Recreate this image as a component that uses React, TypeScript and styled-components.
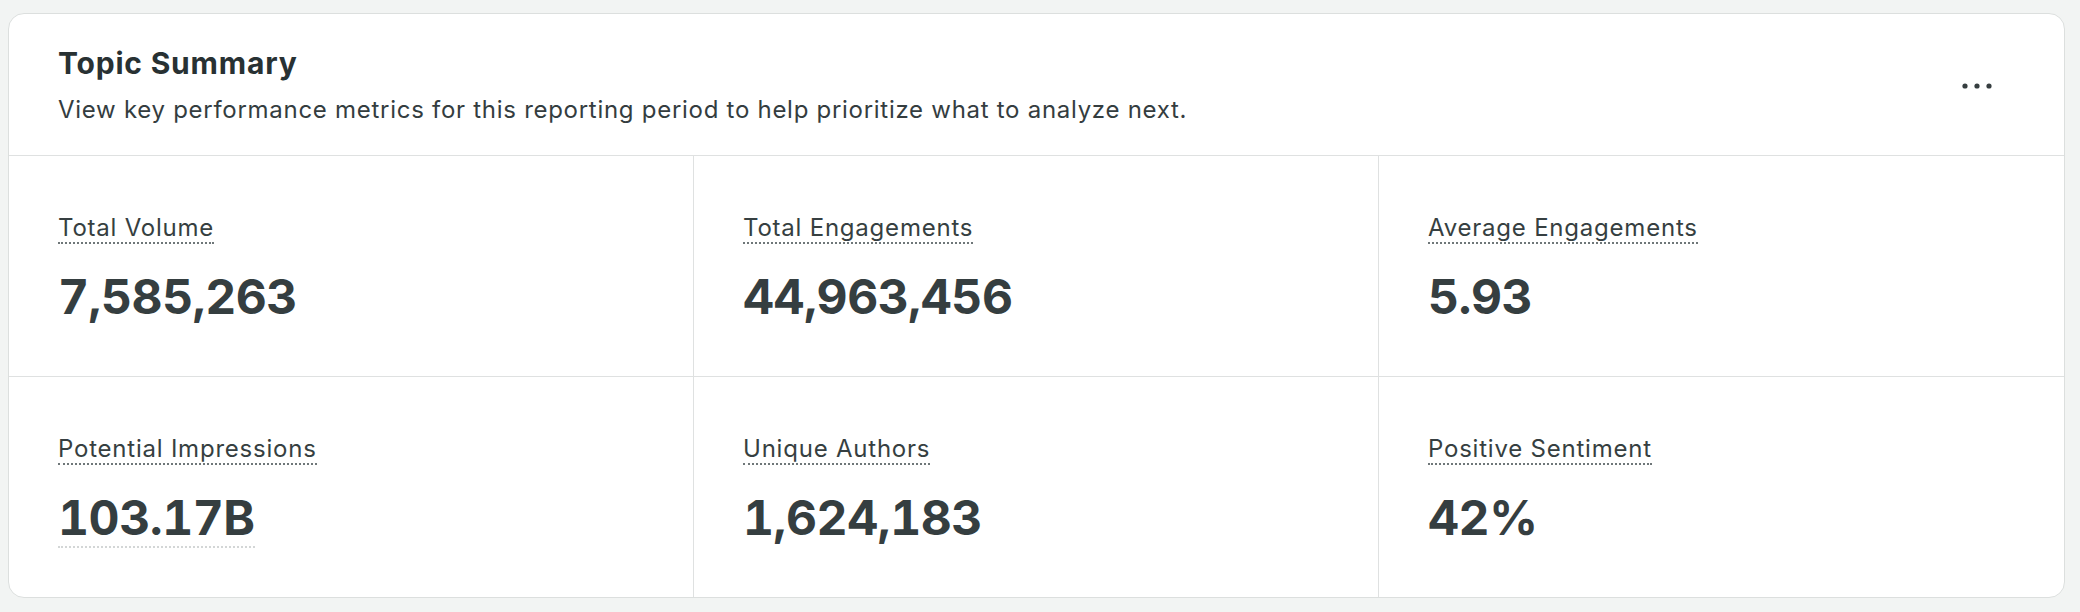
import React from "react";
import styled, { createGlobalStyle } from "styled-components";

const GlobalStyle = createGlobalStyle`
  html, body {
    margin: 0;
    padding: 0;
    background: #f2f4f3;
  }
  body {
    font-family: Inter, "Noto Sans", "Liberation Sans", sans-serif;
    -webkit-font-smoothing: antialiased;
  }
`;

const Page = styled.div`
  padding: 13px 15px 14px 8px;
`;

const Card = styled.section`
  background: #ffffff;
  border: 1px solid #dcdfde;
  border-radius: 16px;
  overflow: hidden;
`;

const Header = styled.header`
  display: flex;
  align-items: center;
  justify-content: space-between;
  padding: 31px 63px 29px 49px;
  border-bottom: 1px solid #dfe1e1;
`;

const HeaderText = styled.div`
  display: flex;
  flex-direction: column;
  gap: 13px;
`;

const Title = styled.h2`
  margin: 0;
  font-size: 30px;
  line-height: 36px;
  font-weight: 700;
  letter-spacing: 0.8px;
  color: #283133;
`;

const Description = styled.p`
  margin: 0;
  font-size: 24px;
  line-height: 32px;
  font-weight: 400;
  letter-spacing: 0.72px;
  color: #343d3f;
`;

const MoreButton = styled.button`
  display: flex;
  align-items: center;
  justify-content: center;
  width: 48px;
  height: 48px;
  padding: 0;
  border: none;
  background: transparent;
  color: #363e40;
  cursor: pointer;
`;

const Grid = styled.div`
  display: grid;
  grid-template-columns: repeat(3, 1fr);
`;

const Cell = styled.div<{ $lastCol: boolean; $lastRow: boolean }>`
  display: flex;
  flex-direction: column;
  align-items: flex-start;
  padding: 58px 49px 49px;
  border-right: ${(p) => (p.$lastCol ? "none" : "1px solid #dfe1e1")};
  border-bottom: ${(p) => (p.$lastRow ? "none" : "1px solid #dfe1e1")};
`;

const Label = styled.span`
  display: inline-block;
  margin-bottom: 25px;
  font-size: 24px;
  line-height: 28px;
  font-weight: 400;
  letter-spacing: 0.78px;
  color: #363f41;
  border-bottom: 2px dotted #6f7779;
`;

const Value = styled.span<{ $dotted?: boolean }>`
  display: inline-block;
  font-size: 48px;
  line-height: 56px;
  font-weight: 700;
  font-variant-numeric: tabular-nums;
  letter-spacing: -0.45px;
  color: #353e40;
  border-bottom: 2px dotted ${(p) => (p.$dotted ? "#d3d6d6" : "transparent")};
`;

const metrics = [
  { label: "Total Volume", value: "7,585,263" },
  { label: "Total Engagements", value: "44,963,456" },
  { label: "Average Engagements", value: "5.93" },
  { label: "Potential Impressions", value: "103.17B", dotted: true },
  { label: "Unique Authors", value: "1,624,183" },
  { label: "Positive Sentiment", value: "42%" },
];

const DotsIcon = () => (
  <svg width="36" height="8" viewBox="0 0 36 8" aria-hidden="true">
    <circle cx="6" cy="4" r="2.6" fill="currentColor" />
    <circle cx="18" cy="4" r="2.6" fill="currentColor" />
    <circle cx="30" cy="4" r="2.6" fill="currentColor" />
  </svg>
);

export default function App() {
  return (
    <>
      <GlobalStyle />
      <Page>
        <Card>
          <Header>
            <HeaderText>
              <Title>Topic Summary</Title>
              <Description>
                View key performance metrics for this reporting period to help prioritize what to analyze next.
              </Description>
            </HeaderText>
            <MoreButton aria-label="More options">
              <DotsIcon />
            </MoreButton>
          </Header>
          <Grid>
            {metrics.map((m, i) => (
              <Cell key={m.label} $lastCol={i % 3 === 2} $lastRow={i >= 3}>
                <Label>{m.label}</Label>
                <Value $dotted={m.dotted}>{m.value}</Value>
              </Cell>
            ))}
          </Grid>
        </Card>
      </Page>
    </>
  );
}
